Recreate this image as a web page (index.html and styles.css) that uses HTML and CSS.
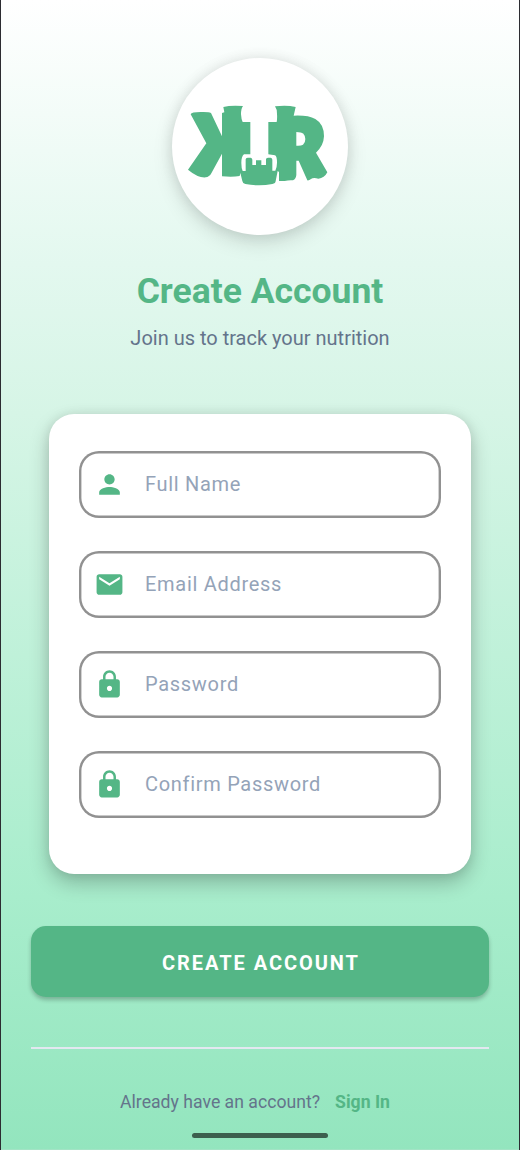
FILE: index.html
```html
<!DOCTYPE html>
<html lang="en">
<head>
<meta charset="utf-8">
<title>Create Account</title>
<link rel="stylesheet" href="styles.css">
</head>
<body>
<svg class="defs" width="0" height="0" aria-hidden="true">
  <symbol id="lock" viewBox="0 0 24 24"><path d="M18 8h-1V6c0-2.760-2.240-5-5-5S7 3.240 7 6v2H6c-1.100 0-2 .9-2 2v10c0 1.100.9 2 2 2h12c1.100 0 2-.9 2-2V10c0-1.100-.9-2-2-2zm-6 9c-1.100 0-2-.9-2-2s.9-2 2-2 2 .9 2 2-.9 2-2 2zm3.100-9H8.900V6c0-1.710 1.390-3.100 3.100-3.100s3.100 1.390 3.100 3.100v2z"/></symbol>
</svg>
<main class="screen">
  <div class="logo">
    <svg class="logo-art" viewBox="36 39 528 531" aria-label="KR logo">
      <path d="M92 208Q94 201 122 201Q146 200 153 204L186 274V204L193 202L190 186Q212 180 249 183Q243 190 243 208Q244 224 248 231H271V328H252Q244 334 244 354Q244 370 248 378H257V343Q257 338 263 338H272Q277 339 277 344V360H288V346H304V360H318V343Q318 338 324 338H332Q337 339 337 344V377H346Q351 366 351 353Q351 334 345 331L325 328V231H350Q352 222 351 207Q351 192 345 184Q380 179 407 186L401 212Q444 210 466 222Q492 237 492 274Q491 302 468 323L502 382Q493 400 475 401Q460 397 453 402Q447 407 442 406L416 347H409V390Q408 402 399 406Q386 405 374 408H357V381L353 378L347 408Q347 415 337 417Q298 425 256 417Q248 415 247 408L241 384L239 393Q218 397 186 394V274V326L154 385Q148 396 137 397Q114 399 84 374L139 295Z"/>
      <path class="logo-hole" d="M409 261Q424 261 430 266Q436 272 436 282Q436 294 429 299Q423 303 409 302Z"/>
    </svg>
  </div>
  <h1 class="title">Create Account</h1>
  <p class="subtitle">Join us to track your nutrition</p>

  <form class="card">
    <label class="field">
      <svg class="icon" viewBox="0 0 24 24"><path d="M12 12c2.210 0 4-1.790 4-4s-1.790-4-4-4-4 1.790-4 4 1.790 4 4 4zm0 2c-2.670 0-8 1.340-8 4v2h16v-2c0-2.660-5.330-4-8-4z"/></svg>
      <span>Full Name</span>
    </label>
    <label class="field">
      <svg class="icon" viewBox="0 0 24 24"><path d="M20 4H4c-1.100 0-1.990.9-1.990 2L2 18c0 1.100.9 2 2 2h16c1.100 0 2-.9 2-2V6c0-1.100-.9-2-2-2zm0 4l-8 5-8-5V6l8 5 8-5v2z"/></svg>
      <span>Email Address</span>
    </label>
    <label class="field">
      <svg class="icon"><use href="#lock"/></svg>
      <span>Password</span>
    </label>
    <label class="field">
      <svg class="icon"><use href="#lock"/></svg>
      <span>Confirm Password</span>
    </label>
  </form>

  <button class="submit" type="button">CREATE ACCOUNT</button>
  <div class="divider"></div>
  <p class="signin"><span>Already have an account?</span><a class="signin-link">Sign In</a></p>
  <div class="home-bar"></div>
</main>
</body>
</html>
```
FILE: styles.css
```css
* { box-sizing: border-box; }
body { margin: 0; font-family: Roboto, sans-serif; }
.defs { display: none; }
.screen {
  width: 520px;
  height: 1150px;
  padding: 58px 30px 0;
  display: flex;
  flex-direction: column;
  align-items: center;
  border: solid #2c2c31;
  border-width: 0 1px;
  background: linear-gradient(180deg, #ffffff 0%, #e3f8ef 23%, #d6f5e6 36%, #a8edcc 78%, #93e5be 100%);
  box-shadow: inset 0 -1px #a3e3c5;
  overflow: hidden;
}
.logo {
  width: 176px;
  height: 177px;
  flex: none;
  border-radius: 50%;
  background: #fff;
  box-shadow: 0 8px 20px rgba(0, 0, 0, .13), 0 0 14px rgba(0, 0, 0, .09);
}
.logo-art { display: block; width: 100%; height: 100%; fill: #54b686; }
.logo-hole { fill: #fff; }
.title {
  margin: 35px 0 0;
  font-size: 35.5px;
  line-height: 42px;
  font-weight: 700;
  color: #54b686;
}
.subtitle {
  margin: 14px 0 0;
  font-size: 20px;
  line-height: 24px;
  color: #64748b;
}
.card {
  width: 422px;
  height: 459.6px;
  flex: none;
  margin-top: 64px;
  padding: 36.8px 30px 0;
  display: flex;
  flex-direction: column;
  gap: 33px;
  border-radius: 25px;
  background: #fff;
  box-shadow: 0 9px 20px rgba(0, 0, 0, .23), 0 0 11px rgba(0, 0, 0, .08);
}
.field {
  height: 67px;
  display: flex;
  align-items: center;
  padding: 0 0 1px 15px;
  gap: 20px;
  border-radius: 20px;
  box-shadow: inset 0 0 0 2.4px #919191;
  font-size: 20px;
  letter-spacing: .7px;
  color: #94a3b8;
}
.icon { width: 31px; height: 31px; flex: none; margin-top: 1px; fill: #54b686; }
.submit {
  width: 458px;
  height: 71px;
  flex: none;
  margin-top: 52.4px;
  padding: 3px 0 0 2px;
  border: 0;
  border-radius: 15px;
  background: #54b686;
  box-shadow: 0 3px 4px rgba(0, 0, 0, .24);
  font: 700 20px Roboto, sans-serif;
  letter-spacing: 1.95px;
  color: #fff;
}
.divider { width: 458px; height: 2px; flex: none; margin-top: 50px; background: #e2e8f0; }
.signin {
  display: flex;
  gap: 15px;
  margin: 42px 0 0;
  padding-right: 10px;
  font-size: 17.65px;
  line-height: 22px;
  color: #64748b;
}
.signin-link { font-weight: 700; color: #54b686; }
.home-bar { width: 136px; height: 5px; flex: none; margin-top: 20px; border-radius: 3px; background: #3c5f4e; }
```
